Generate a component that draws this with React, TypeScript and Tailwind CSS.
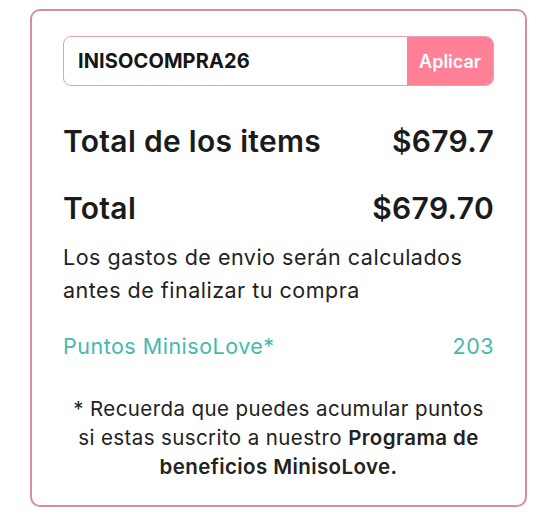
export default function App() {
  return (
    <div className="min-h-screen bg-white pt-[9px] pl-[30px] font-['Inter','Noto_Sans',sans-serif] text-[#1b1b1b]">
      <div className="w-[497px] h-[498px] rounded-[10px] border-2 border-[#d98ea0] px-[31px] pt-[25px]">
        {/* coupon */}
        <div className="flex h-[50px] overflow-hidden rounded-[8px] border-[1.5px] border-[#e4a3b3]">
          <div className="flex flex-1 items-center pl-[14px] text-[20px] font-bold tracking-[0.1px] text-[#161616]">
            INISOCOMPRA26
          </div>
          <button className="w-[86px] bg-[#ff8097] text-[18px] font-semibold text-white">
            Aplicar
          </button>
        </div>

        <div className="mt-[35px] flex items-center justify-between text-[30px] font-semibold leading-[40px] tracking-[0.3px]">
          <span>Total de los items</span>
          <span>$679.7</span>
        </div>

        <div className="mt-[27px] flex items-center justify-between text-[30px] font-semibold leading-[40px] tracking-[0.3px]">
          <span>Total</span>
          <span>$679.70</span>
        </div>

        <p className="mt-[13px] text-[21.5px] leading-[33px] tracking-[0.5px] text-[#222]">
          Los gastos de envio serán calculados
          <br />
          antes de finalizar tu compra
        </p>

        <div className="mt-[24px] flex items-center justify-between text-[21.5px] leading-[30px] tracking-[0.5px] text-[#45b9b1]">
          <span>Puntos MinisoLove*</span>
          <span>203</span>
        </div>

        <p className="mt-[33px] text-center text-[20.5px] leading-[29px] tracking-[0.4px] text-[#222]">
          * Recuerda que puedes acumular puntos
          <br />
          si estas suscrito a nuestro <span className="font-semibold">Programa de</span>
          <br />
          <span className="font-semibold">beneficios MinisoLove.</span>
        </p>
      </div>
    </div>
  );
}
